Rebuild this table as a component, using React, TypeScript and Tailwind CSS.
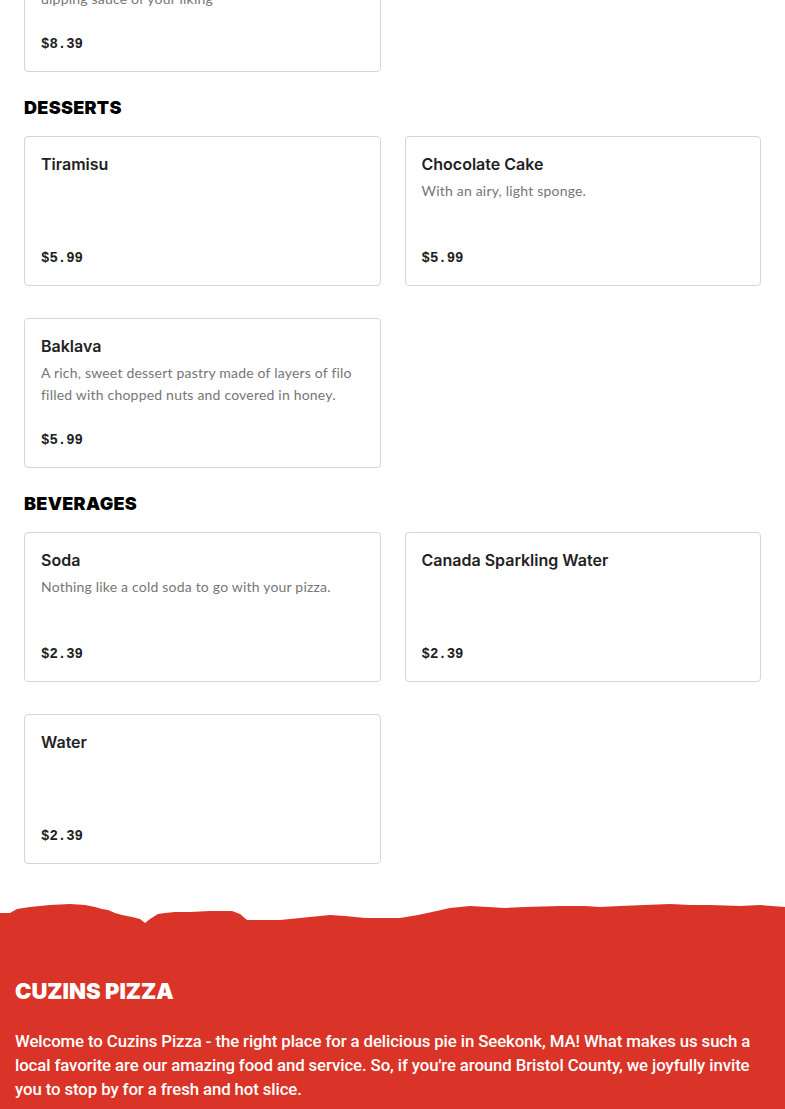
import React from "react";

type Item = { name: string; desc?: string; price: string };

function Card({ item }: { item: Item }) {
  return (
    <div className="flex h-[150px] flex-col justify-between rounded-[4px] border border-[#d6d6d6] bg-white px-4 pb-[15px] pt-[15px]">
      <div>
        <div className="font-['Inter',sans-serif] text-[16px] font-semibold leading-[24px] text-[#222222]">
          {item.name}
        </div>
        {item.desc && (
          <div className="mt-[4px] font-['Lato',sans-serif] text-[14px] leading-[22px] tracking-[0.2px] text-[#767676]">
            {item.desc}
          </div>
        )}
      </div>
      <div className="font-['Liberation_Mono',monospace] text-[14px] font-bold leading-[24px] text-[#222222]">
        {item.price}
      </div>
    </div>
  );
}

function Section({ title, items }: { title: string; items: Item[] }) {
  return (
    <div>
      <h2 className="mb-[14px] mt-[22px] font-['Inter',sans-serif] text-[18px] font-black leading-[28px] tracking-[0.3px] text-black">
        {title}
      </h2>
      <div className="grid grid-cols-2 gap-x-6 gap-y-8">
        {items.map((it) => (
          <Card key={it.name} item={it} />
        ))}
      </div>
    </div>
  );
}

export default function App() {
  return (
    <div className="min-h-[1109px] overflow-hidden bg-white">
      <div className="px-6">
        <div className="mt-[-78px] grid grid-cols-2 gap-x-6">
          <Card
            item={{
              name: "Chicken Tenders",
              desc: "Crispy breaded chicken tenders served with a dipping sauce of your liking",
              price: "$8.39",
            }}
          />
        </div>
        <Section
          title="DESSERTS"
          items={[
            { name: "Tiramisu", price: "$5.99" },
            { name: "Chocolate Cake", desc: "With an airy, light sponge.", price: "$5.99" },
            {
              name: "Baklava",
              desc: "A rich, sweet dessert pastry made of layers of filo filled with chopped nuts and covered in honey.",
              price: "$5.99",
            },
          ]}
        />
        <Section
          title="BEVERAGES"
          items={[
            { name: "Soda", desc: "Nothing like a cold soda to go with your pizza.", price: "$2.39" },
            { name: "Canada Sparkling Water", price: "$2.39" },
            { name: "Water", price: "$2.39" },
          ]}
        />
      </div>

      <footer className="mt-[38px]">
        <svg
          className="block h-[24px] w-full"
          viewBox="0 0 785 24"
          preserveAspectRatio="none"
        >
          <path
            fill="#d93427"
            d="M0 11 L10 11 L17 7 L30 5 L50 3 L70 2 L85 3 L95 5 L102 7 L108 8 L115 11 L122 13 L132 15 L140 17 L145 21 L150 17 L158 12 L165 11 L175 10 L190 10 L210 9 L232 9 L240 12 L247 18 L262 18 L280 18 L300 16 L320 14 L330 13 L345 14 L365 16 L380 16 L400 16 L418 13 L432 10 L450 6 L470 4 L488 5 L505 6 L525 5 L560 4 L585 4 L600 5 L620 4 L645 3 L670 2 L690 3 L710 3 L740 4 L760 3 L785 5 L785 24 L0 24 Z"
          />
        </svg>
        <div className="bg-[#d93427] px-[15px] pb-[20px] pt-[51px] text-white">
          <h3 className="font-['Inter',sans-serif] text-[22px] font-black leading-[28px] tracking-[0px]">
            CUZINS PIZZA
          </h3>
          <p className="mt-[24px] font-['Roboto',sans-serif] text-[16.8px] font-medium leading-[24px] tracking-[-0.1px]">
            Welcome to Cuzins Pizza - the right place for a delicious pie in Seekonk, MA! What makes us such a local favorite are our amazing food and service. So, if you're around Bristol County, we joyfully invite you to stop by for a fresh and hot slice.
          </p>
        </div>
      </footer>
    </div>
  );
}
